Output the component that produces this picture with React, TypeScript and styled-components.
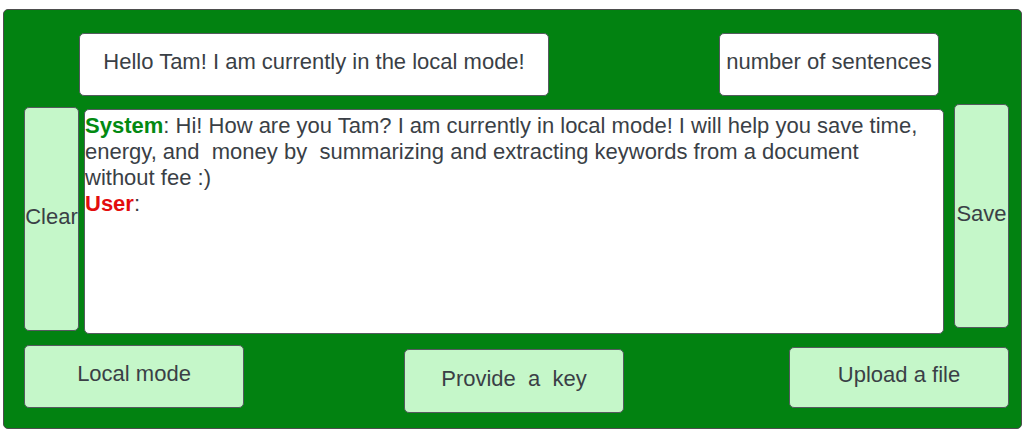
import styled, { createGlobalStyle } from "styled-components";

const Global = createGlobalStyle`
  html, body {
    margin: 0;
    padding: 0;
    background: #ffffff;
  }
  body {
    font-family: "Liberation Sans", Arial, sans-serif;
    color: #3a3f46;
  }
`;

const Panel = styled.div`
  margin: 9px 0 0 3px;
  width: 1019px;
  height: 420px;
  box-sizing: border-box;
  background: #028211;
  border: 1px solid #4d4d4d;
  border-radius: 5px;
  display: flex;
  flex-direction: column;
`;

const Row = styled.div<{ $top: number; $left: number }>`
  display: flex;
  align-items: flex-start;
  margin-top: ${(p) => p.$top}px;
  padding-left: ${(p) => p.$left}px;
`;

const Box = styled.div<{ $w: number; $h: number; $top?: number; $left?: number; $light?: boolean }>`
  box-sizing: border-box;
  width: ${(p) => p.$w}px;
  height: ${(p) => p.$h}px;
  margin-top: ${(p) => p.$top ?? 0}px;
  margin-left: ${(p) => p.$left ?? 0}px;
  background: ${(p) => (p.$light ? "#c5f7c9" : "#ffffff")};
  border: 1px solid #555a5f;
  border-radius: 5px;
  display: flex;
  align-items: center;
  justify-content: center;
  padding-bottom: 5px;
  font-size: 22px;
  white-space: pre;
  flex-shrink: 0;
`;

const SideButton = styled(Box)`
  padding-bottom: 4px;
  overflow: visible;
`;

const Chat = styled.div`
  box-sizing: border-box;
  width: 860px;
  height: 225px;
  margin-top: 5px;
  margin-left: 5px;
  background: #ffffff;
  border: 1px solid #555a5f;
  border-radius: 5px;
  padding: 3px 0 0 0;
  font-size: 22px;
  line-height: 26px;
  white-space: pre-wrap;
  flex-shrink: 0;
`;

const Role = styled.span<{ $color: string }>`
  font-weight: bold;
  color: ${(p) => p.$color};
`;

export default function App() {
  return (
    <>
      <Global />
      <Panel>
        <Row $top={23} $left={75}>
          <Box $w={470} $h={63}>Hello Tam! I am currently in the local mode!</Box>
          <Box $w={220} $h={63} $left={170}>number of sentences</Box>
        </Row>
        <Row $top={8} $left={20}>
          <SideButton $w={55} $h={224} $top={3} $light>Clear</SideButton>
          <Chat>
            <Role $color="#038a12">System</Role>
            {": Hi! How are you Tam? I am currently in local mode! I will help you save time,\nenergy, and  money by  summarizing and extracting keywords from a document\nwithout fee :)\n"}
            <Role $color="#e30d0d">User</Role>:
          </Chat>
          <SideButton $w={55} $h={224} $left={10} $light>Save</SideButton>
        </Row>
        <Row $top={11} $left={20}>
          <Box $w={220} $h={63} $light>Local mode</Box>
          <Box $w={220} $h={64} $top={4} $left={160} $light>Provide  a  key</Box>
          <Box $w={220} $h={61} $top={2} $left={165} $light>Upload a file</Box>
        </Row>
      </Panel>
    </>
  );
}
